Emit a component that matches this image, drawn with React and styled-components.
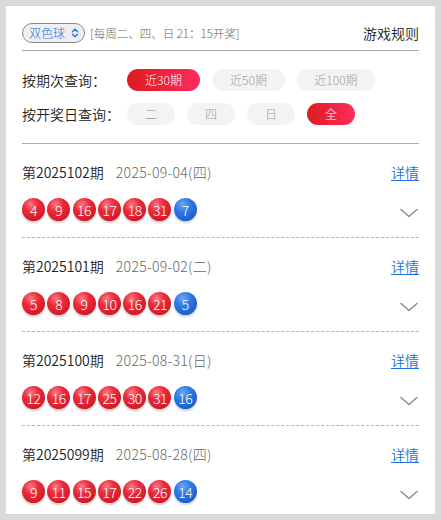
import React, { useState } from "react";
import styled, { createGlobalStyle } from "styled-components";

const Global = createGlobalStyle`
  html, body { margin: 0; padding: 0; background: #d9d9d9; }
  body { font-family: "Noto Sans CJK SC", "Liberation Sans", sans-serif; font-weight: 350; }
  * { box-sizing: border-box; }
`;

const Page = styled.div`
  padding: 6px;
  min-height: 520px;
`;

const Card = styled.div`
  background: #fff;
  padding: 17px 16px 0;
  height: 508px;
  overflow: hidden;
`;

const Header = styled.div`
  display: flex;
  align-items: center;
  height: 20px;
  padding-bottom: 7px;
  border-bottom: 1px solid #ababab;
  box-sizing: content-box;
`;

const Select = styled.div`
  display: flex;
  align-items: center;
  gap: 6px;
  height: 20px;
  padding: 0 5px 0 6px;
  border: 1px solid #8a8a8a;
  border-radius: 10px;
  background: #efefef;
  color: #1f6fe5;
  font-size: 12px;
  font-weight: 300;
  line-height: 18px;
`;

const Schedule = styled.span`
  margin-left: 5px;
  font-size: 11.5px;
  font-weight: 300;
  color: #666;
  white-space: nowrap;
`;

const Rules = styled.span`
  margin-left: auto;
  font-size: 14px;
  color: #222;
`;

const Filters = styled.div`
  display: flex;
  flex-direction: column;
  gap: 12px;
  padding: 18px 0 18px;
  border-bottom: 1px solid #ababab;
`;

const FilterRow = styled.div`
  display: flex;
  align-items: center;
`;

const FilterLabel = styled.span`
  width: 105px;
  font-size: 14px;
  color: #222;
  white-space: nowrap;
`;

const Chips = styled.div`
  display: flex;
  gap: 12px;
`;

const Chip = styled.button`
  border: none;
  height: 22px;
  width: ${(p) => p.$w}px;
  border-radius: 11px;
  padding: 0;
  font-family: inherit;
  font-weight: 300;
  font-size: 12px;
  line-height: 22px;
  color: ${(p) => (p.$active ? "#fff" : "#a0a0a0")};
  background: ${(p) =>
    p.$active ? "linear-gradient(90deg, #dc1d1f 0%, #f12543 60%, #ff2d5c 100%)" : "#f3f3f3"};
`;

const Item = styled.div`
  padding: 18px 0 16px;
  border-bottom: 1px dashed #b4b4b4;
  display: flex;
  flex-direction: column;
  gap: 16px;
`;

const TitleRow = styled.div`
  display: flex;
  align-items: center;
  height: 20px;
`;

const Issue = styled.span`
  font-size: 14px;
  color: #222;
`;

const DateText = styled.span`
  margin-left: 12px;
  font-size: 14px;
  font-weight: 300;
  color: #666;
  letter-spacing: 0.3px;
`;

const Detail = styled.a`
  margin-left: auto;
  font-size: 14px;
  color: #1f6fe5;
  text-decoration: underline;
  text-underline-offset: 2px;
`;

const BallRow = styled.div`
  display: flex;
  align-items: center;
  height: 23px;
`;

const Balls = styled.div`
  display: flex;
  gap: 2.3px;
`;

const Ball = styled.span`
  width: 23px;
  height: 23px;
  border-radius: 50%;
  display: flex;
  align-items: center;
  justify-content: center;
  color: #fff;
  font-size: 14px;
  font-weight: 300;
  letter-spacing: -0.5px;
  background: ${(p) =>
    p.$blue
      ? "radial-gradient(circle at 38% 28%, #6aa8f5 0%, #2f7ae6 35%, #1b5fcc 75%, #174fae 100%)"
      : "radial-gradient(circle at 38% 28%, #ff7a82 0%, #ea2a3a 35%, #d21a28 75%, #b3121d 100%)"};
  box-shadow: 0 2px 2px rgba(0, 0, 0, 0.18);
`;

const Chevron = styled.svg`
  margin-left: auto;
  margin-right: 1px;
  margin-top: 6px;
`;

const UpDown = () => (
  <svg width="8" height="10" viewBox="0 0 8 10" fill="none" stroke="#1f6fe5" strokeWidth="1.4" strokeLinecap="round" strokeLinejoin="round">
    <path d="M1.5 3.8 L4 1.3 L6.5 3.8" />
    <path d="M1.5 6.2 L4 8.7 L6.5 6.2" />
  </svg>
);

const draws = [
  { issue: "第2025102期", date: "2025-09-04(四)", red: [4, 9, 16, 17, 18, 31], blue: 7 },
  { issue: "第2025101期", date: "2025-09-02(二)", red: [5, 8, 9, 10, 16, 21], blue: 5 },
  { issue: "第2025100期", date: "2025-08-31(日)", red: [12, 16, 17, 25, 30, 31], blue: 16 },
  { issue: "第2025099期", date: "2025-08-28(四)", red: [9, 11, 15, 17, 22, 26], blue: 14 },
];

export default function App() {
  const [period, setPeriod] = useState(0);
  const [day, setDay] = useState(3);
  const periods = [
    ["近30期", 73],
    ["近50期", 73],
    ["近100期", 78],
  ];
  const days = ["二", "四", "日", "全"];
  return (
    <Page>
      <Global />
      <Card>
        <Header>
          <Select>
            双色球
            <UpDown />
          </Select>
          <Schedule>[每周二、四、日 21：15开奖]</Schedule>
          <Rules>游戏规则</Rules>
        </Header>
        <Filters>
          <FilterRow>
            <FilterLabel>按期次查询：</FilterLabel>
            <Chips>
              {periods.map(([t, w], i) => (
                <Chip key={t} $w={w} $active={period === i} onClick={() => setPeriod(i)}>
                  {t}
                </Chip>
              ))}
            </Chips>
          </FilterRow>
          <FilterRow>
            <FilterLabel>按开奖日查询：</FilterLabel>
            <Chips>
              {days.map((t, i) => (
                <Chip key={t} $w={48} $active={day === i} onClick={() => setDay(i)}>
                  {t}
                </Chip>
              ))}
            </Chips>
          </FilterRow>
        </Filters>
        {draws.map((d) => (
          <Item key={d.issue}>
            <TitleRow>
              <Issue>{d.issue}</Issue>
              <DateText>{d.date}</DateText>
              <Detail>详情</Detail>
            </TitleRow>
            <BallRow>
              <Balls>
                {d.red.map((n, i) => (
                  <Ball key={i}>{n}</Ball>
                ))}
                <Ball $blue>{d.blue}</Ball>
              </Balls>
              <Chevron width="18" height="10" viewBox="0 0 18 10" fill="none" stroke="#8c8c8c" strokeWidth="1.5" strokeLinecap="round" strokeLinejoin="round">
                <path d="M1 1.5 L9 8.5 L17 1.5" />
              </Chevron>
            </BallRow>
          </Item>
        ))}
      </Card>
    </Page>
  );
}
